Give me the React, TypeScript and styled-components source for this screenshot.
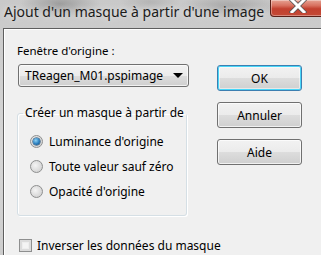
import React from "react";
import styled, { createGlobalStyle } from "styled-components";

const Global = createGlobalStyle`
  html, body { margin: 0; padding: 0; background: #f0f0f0; }
  body { font-family: "Noto Sans", "Open Sans", sans-serif; }
`;

const Window = styled.div`
  width: 321px;
  height: 255px;
  overflow: hidden;
  display: flex;
  flex-direction: column;
  background:
    radial-gradient(ellipse 40px 14px at 60px 4px, rgba(120,120,120,0.55), transparent),
    radial-gradient(ellipse 50px 12px at 230px 6px, rgba(130,130,130,0.5), transparent),
    radial-gradient(ellipse 30px 10px at 150px 2px, rgba(150,150,150,0.4), transparent),
    linear-gradient(#c9c9c9, #d6d6d6 60%, #cdcdcd);
`;

const TitleBar = styled.div`
  height: 28px;
  flex: none;
  display: flex;
  justify-content: space-between;
  align-items: flex-start;
`;

const Title = styled.div`
  padding: 3px 0 0 4px;
  font-size: 14px;
  line-height: 18px;
  color: #1b1b1b;
  white-space: nowrap;
  text-shadow: 0 0 6px rgba(255,255,255,0.7);
`;

const CloseButton = styled.div`
  width: 56px;
  height: 17px;
  margin-right: -5px;
  box-sizing: border-box;
  border: 1px solid #5a2018;
  border-top: none;
  border-radius: 0 0 0 4px;
  background: linear-gradient(#e6a293 0%, #d8705f 35%, #c2402f 55%, #c44a36 100%);
  box-shadow: inset 0 0 0 1px rgba(255,255,255,0.35);
  display: flex;
  justify-content: center;
  align-items: flex-start;
`;

const Frame = styled.div`
  flex: 1;
  margin-left: 3px;
  border-top: 1px solid #5e5e5e;
  border-left: 1px solid #5e5e5e;
  background: #f0f0f0;
  box-shadow: inset 1px 1px 0 #ffffff;
  display: grid;
  grid-template-columns: 172px 85px;
  column-gap: 28px;
  padding: 14px 0 0 13px;
  align-content: start;
  font-size: 11.5px;
  color: #000;
`;

const LeftCol = styled.div`
  display: flex;
  flex-direction: column;
`;

const Label = styled.div`
  line-height: 16px;
  height: 16px;
`;

const Combo = styled.div`
  margin-top: 5px;
  margin-left: 1px;
  height: 23px;
  width: 171px;
  box-sizing: border-box;
  border: 1px solid #707070;
  border-radius: 3px;
  background: linear-gradient(#f2f2f2 0%, #ebebeb 50%, #dddddd 50%, #cfcfcf 100%);
  box-shadow: inset 0 0 0 1px rgba(255,255,255,0.7);
  display: flex;
  align-items: center;
  justify-content: space-between;
  padding: 0 5px 0 6px;
  font-size: 12px;
`;

const Arrow = styled.div`
  width: 0;
  height: 0;
  border-left: 5px solid transparent;
  border-right: 5px solid transparent;
  border-top: 5px solid #000;
`;

const Group = styled.fieldset`
  margin: 18px 0 0 0;
  padding: 0 0 0 12px;
  width: 170px;
  height: 111px;
  box-sizing: border-box;
  border: 1px solid #d5dfe5;
  border-radius: 3px;
  box-shadow: inset 1px 1px 0 #ffffff, 1px 1px 0 #ffffff;
`;

const Legend = styled.legend`
  margin-left: -7px;
  padding: 0 2px;
  line-height: 16px;
  white-space: nowrap;
  font-size: 12px;
`;

const RadioList = styled.div`
  display: flex;
  flex-direction: column;
  gap: 9px;
  padding-top: 12px;
`;

const RadioRow = styled.label`
  display: flex;
  align-items: center;
  gap: 6px;
  height: 16px;
  font-size: 12px;
  white-space: nowrap;
`;

const Radio = styled.span<{ $checked?: boolean }>`
  width: 13px;
  height: 13px;
  flex: none;
  box-sizing: border-box;
  border-radius: 50%;
  border: 1px solid #8e8f8f;
  background: radial-gradient(circle at 40% 40%, #f4f4f4, #d6d6d6 70%, #e8e8e8);
  display: flex;
  align-items: center;
  justify-content: center;
  &::after {
    content: "";
    width: 7px;
    height: 7px;
    border-radius: 50%;
    display: ${(p) => (p.$checked ? "block" : "none")};
    background: radial-gradient(circle at 40% 35%, #8fd3f5, #2b7fbf 55%, #0d3f6e);
    box-shadow: 0 0 0 0.5px #0b3a63;
  }
`;

const RightCol = styled.div`
  display: flex;
  flex-direction: column;
  gap: 11px;
  padding-top: 22px;
`;

const Button = styled.div<{ $default?: boolean }>`
  height: 26px;
  box-sizing: border-box;
  border: 1px solid ${(p) => (p.$default ? "#3c7fb1" : "#707070")};
  border-radius: 3px;
  background: linear-gradient(#f2f2f2 0%, #ebebeb 50%, #dddddd 50%, #cfcfcf 100%);
  box-shadow: ${(p) =>
    p.$default
      ? "inset 0 0 0 1px #48d6f8, inset 0 0 0 2px rgba(255,255,255,0.5)"
      : "inset 0 0 0 1px rgba(255,255,255,0.7)"};
  display: flex;
  align-items: center;
  justify-content: center;
  font-size: 12px;
`;

const CheckRow = styled.label`
  grid-column: 1 / span 2;
  margin-top: 21px;
  margin-left: 2px;
  display: flex;
  align-items: center;
  gap: 5px;
  height: 16px;
  font-size: 12px;
  white-space: nowrap;
`;

const Check = styled.span`
  width: 13px;
  height: 13px;
  flex: none;
  box-sizing: border-box;
  border: 1px solid #8e8f8f;
  background: #f4f4f4;
  box-shadow: inset 0 0 0 2px #dcdcdc, inset 0 0 0 3px #eeeeee;
`;

export default function App() {
  return (
    <>
      <Global />
      <Window>
        <TitleBar>
          <Title>Ajout d'un masque à partir d'une image</Title>
          <CloseButton>
            <svg width="18" height="13" viewBox="0 0 18 13">
              <path
                d="M3 0 L15 12 M15 0 L3 12"
                stroke="#555"
                strokeWidth="4.5"
                strokeLinecap="square"
                fill="none"
              />
              <path
                d="M3 0 L15 12 M15 0 L3 12"
                stroke="#fff"
                strokeWidth="3"
                strokeLinecap="square"
                fill="none"
              />
            </svg>
          </CloseButton>
        </TitleBar>
        <Frame>
          <LeftCol>
            <Label>Fenêtre d'origine :</Label>
            <Combo>
              <span>TReagen_M01.pspimage</span>
              <Arrow />
            </Combo>
            <Group>
              <Legend>Créer un masque à partir de</Legend>
              <RadioList>
                <RadioRow>
                  <Radio $checked />
                  Luminance d'origine
                </RadioRow>
                <RadioRow>
                  <Radio />
                  Toute valeur sauf zéro
                </RadioRow>
                <RadioRow>
                  <Radio />
                  Opacité d'origine
                </RadioRow>
              </RadioList>
            </Group>
          </LeftCol>
          <RightCol>
            <Button $default>OK</Button>
            <Button>Annuler</Button>
            <Button>Aide</Button>
          </RightCol>
          <CheckRow>
            <Check />
            Inverser les données du masque
          </CheckRow>
        </Frame>
      </Window>
    </>
  );
}
